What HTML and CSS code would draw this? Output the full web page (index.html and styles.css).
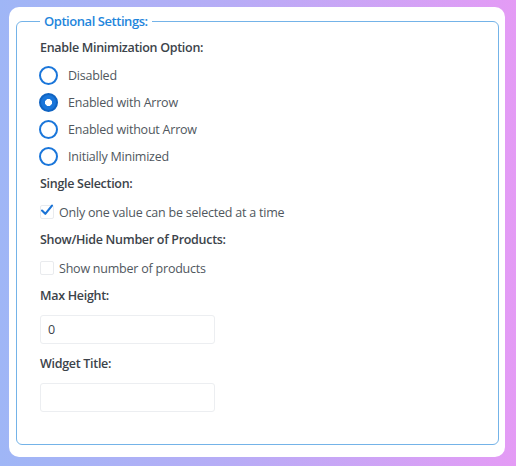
FILE: index.html
```html
<!DOCTYPE html>
<html>
<head>
<meta charset="utf-8">
<link rel="stylesheet" href="styles.css">
</head>
<body>
<div class="card">
  <fieldset class="settings">
    <legend class="legend">Optional Settings:</legend>
    <div class="label">Enable Minimization Option:</div>
    <label class="radio-row"><input type="radio" name="min" class="radio"><span>Disabled</span></label>
    <label class="radio-row"><input type="radio" name="min" class="radio" checked><span>Enabled with Arrow</span></label>
    <label class="radio-row"><input type="radio" name="min" class="radio"><span>Enabled without Arrow</span></label>
    <label class="radio-row"><input type="radio" name="min" class="radio"><span>Initially Minimized</span></label>
    <div class="label">Single Selection:</div>
    <label class="check-row"><span class="box checked"><svg class="tick" viewBox="0 0 14 14" width="14" height="14"><path d="M2 7.5 L5.3 10.8 L12 2.6" fill="none" stroke="#1a73d6" stroke-width="2.1" stroke-linecap="round" stroke-linejoin="round"/></svg></span><span>Only one value can be selected at a time</span></label>
    <div class="label">Show/Hide Number of Products:</div>
    <label class="check-row"><span class="box"></span><span>Show number of products</span></label>
    <div class="label">Max Height:</div>
    <input class="field" type="text" value="0">
    <div class="label label-after-field">Widget Title:</div>
    <input class="field" type="text" value="">
  </fieldset>
</div>
</body>
</html>
```

FILE: styles.css
```css
html, body {
  margin: 0;
  height: 100%;
}
body {
  background: linear-gradient(90deg, #9fb6f6 0%, #b7acf6 45%, #e49bf5 100%);
  padding: 7px 11px 9px 9px;
  box-sizing: border-box;
  font-family: "Open Sans", "Noto Sans", sans-serif;
  color: #50575e;
}
.card {
  background: #fff;
  border-radius: 10px;
  height: 450px;
  box-sizing: border-box;
  padding: 5px 6px 0 7px;
}
.settings {
  margin: 0;
  border: 1px solid #74b3e8;
  border-radius: 6px;
  padding: 4px 20px 0 23px;
  display: flex;
  flex-direction: column;
  align-items: flex-start;
  height: 433px;
  box-sizing: border-box;
}
.legend {
  padding: 0 4px;
  font-size: 13px;
  font-weight: 600;
  line-height: 18px;
  letter-spacing: -0.45px;
  color: #1f86dc;
}
.label {
  font-size: 12.5px;
  font-weight: 600;
  letter-spacing: -0.3px;
  color: #3c434a;
  line-height: 28px;
  height: 28px;
}
.label-after-field {
  margin-top: 6px;
}
.radio-row, .check-row {
  display: flex;
  align-items: center;
  font-size: 12.5px;
  letter-spacing: -0.22px;
  color: #50575e;
}
.radio-row {
  height: 27px;
  gap: 10px;
  margin-left: -1px;
}
.check-row {
  height: 28px;
  gap: 5px;
}
.radio {
  appearance: none;
  -webkit-appearance: none;
  margin: 0;
  width: 19px;
  height: 19px;
  border: 2px solid #1a76da;
  border-radius: 50%;
  box-sizing: border-box;
  background: #fff;
}
.radio:checked {
  background: radial-gradient(circle, #fff 0 3.2px, #1a76da 3.8px);
  border-color: #0f63c2;
}
.box {
  position: relative;
  width: 14px;
  height: 14px;
  border: 1px solid #e9ebee;
  border-radius: 2px;
  box-sizing: border-box;
  background: #fff;
}
.tick {
  position: absolute;
  left: -1px;
  top: -3px;
}
.field {
  margin: 5px 0 0 0;
  width: 175px;
  height: 29px;
  box-sizing: border-box;
  border: 1px solid #eceef1;
  border-radius: 3px;
  padding: 0 7px;
  font-family: "Open Sans", "Noto Sans", sans-serif;
  font-size: 12.5px;
  color: #3c434a;
  outline: none;
}
```
